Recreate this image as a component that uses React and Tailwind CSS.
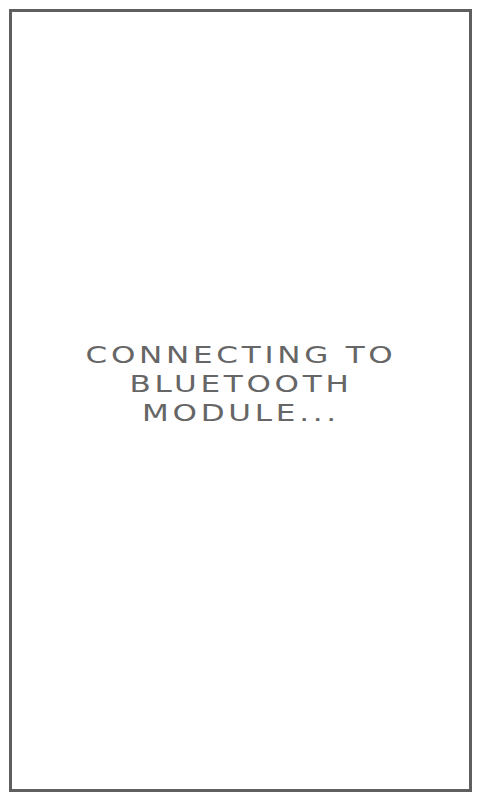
import React from 'react';

const App = () => {
  return (
    <div className="h-screen w-full bg-white pl-[9px] pt-[9px] pr-2 pb-2">
      <div className="h-full w-full border-[3px] border-[#5f5f5f] flex items-center justify-center">
        <p
          className="mb-[32px] w-[240px] scale-x-[1.35] text-center uppercase text-[#666666] text-[23px] leading-[29px] tracking-[0.12em] font-normal"
          style={{ fontFamily: '"DejaVu Sans", sans-serif' }}
        >
          Connecting to Bluetooth Module...
        </p>
      </div>
    </div>
  );
};

export default App;
